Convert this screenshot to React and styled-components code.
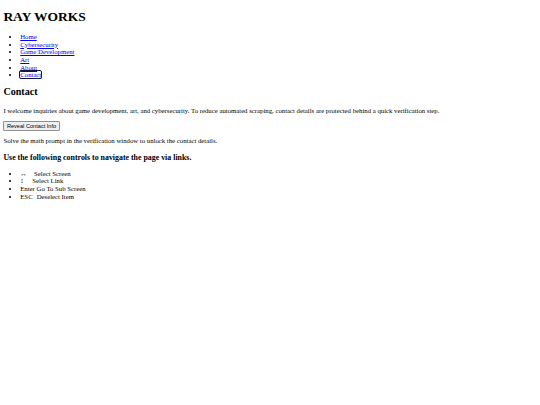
import React from "react";
import styled, { createGlobalStyle } from "styled-components";

// whole page is a desktop render scaled down to the 540px window
const S = 0.421875;
const px = (v) => `${(v * S).toFixed(3)}px`;

const GlobalStyle = createGlobalStyle`
  html, body {
    background: #ffffff;
  }
  body {
    margin: ${px(8)};
    font-family: "Liberation Serif", "Times New Roman", serif;
    font-size: ${px(16)};
    line-height: ${px(18)};
    color: #000000;
  }
`;

const Title = styled.h1`
  font-size: ${px(32)};
  line-height: ${px(37)};
  font-weight: bold;
  margin: ${px(12.4)} 0 ${px(21.44)};
`;

const NavList = styled.ul`
  margin: ${px(16)} 0;
  padding-left: ${px(40)};
  list-style: disc;
`;

const NavLink = styled.a`
  color: #0000ee;
  text-decoration: underline;
  outline: ${(p) => (p.$focused ? "1px solid #15153a" : "none")};
  outline-offset: 0;
  border-radius: 1px;
`;

const Heading = styled.h2`
  font-size: ${px(24)};
  line-height: ${px(27)};
  font-weight: bold;
  margin: ${px(16)} 0 ${px(24)};
`;

const SubHeading = styled.h3`
  font-size: ${px(18.72)};
  line-height: ${px(21.5)};
  font-weight: bold;
  margin: ${px(18.72)} 0;
`;

const Text = styled.p`
  margin: ${px(16)} 0;
`;

const RevealButton = styled.button`
  display: inline-block;
  font-family: "Liberation Sans", Arial, sans-serif;
  font-size: ${px(13.333)};
  line-height: ${px(15)};
  padding: ${px(1)} ${px(6)};
  background: #efefef;
  color: #000000;
  border: 1px solid #8f8f8f;
  border-radius: 1px;
  margin: 0;
`;

const ControlList = styled.ul`
  margin: ${px(16)} 0;
  padding-left: ${px(40)};
  list-style: disc;
`;

const Key = styled.span`
  display: inline-block;
  min-width: ${(p) => (p.$w ? `${p.$w}px` : "0")};
  margin-right: ${(p) => (p.$w ? "0" : px(4))};
`;

const navItems = [
  "Home",
  "Cybersecurity",
  "Game Development",
  "Art",
  "About",
  "Contact",
];

const controls = [
  { key: "↔", w: 13.8, label: "Select Screen" },
  { key: "↕", w: 12.1, label: "Select Link" },
  { key: "Enter", w: 0, label: "Go To Sub Screen" },
  { key: "ESC", w: 16.4, label: "Deselect Item" },
];

const App = () => {
  return (
    <>
      <GlobalStyle />
      <Title>RAY WORKS</Title>
      <NavList>
        {navItems.map((item) => (
          <li key={item}>
            <NavLink href="#" $focused={item === "Contact"}>
              {item}
            </NavLink>
          </li>
        ))}
      </NavList>
      <Heading>Contact</Heading>
      <Text>
        I welcome inquiries about game development, art, and cybersecurity. To
        reduce automated scraping, contact details are protected behind a quick
        verification step.
      </Text>
      <RevealButton type="button">Reveal Contact Info</RevealButton>
      <Text>
        Solve the math prompt in the verification window to unlock the contact
        details.
      </Text>
      <SubHeading>Use the following controls to navigate the page via links.</SubHeading>
      <ControlList>
        {controls.map((c) => (
          <li key={c.key}>
            <Key $w={c.w}>{c.key}</Key>
            {c.label}
          </li>
        ))}
      </ControlList>
    </>
  );
};

export default App;
